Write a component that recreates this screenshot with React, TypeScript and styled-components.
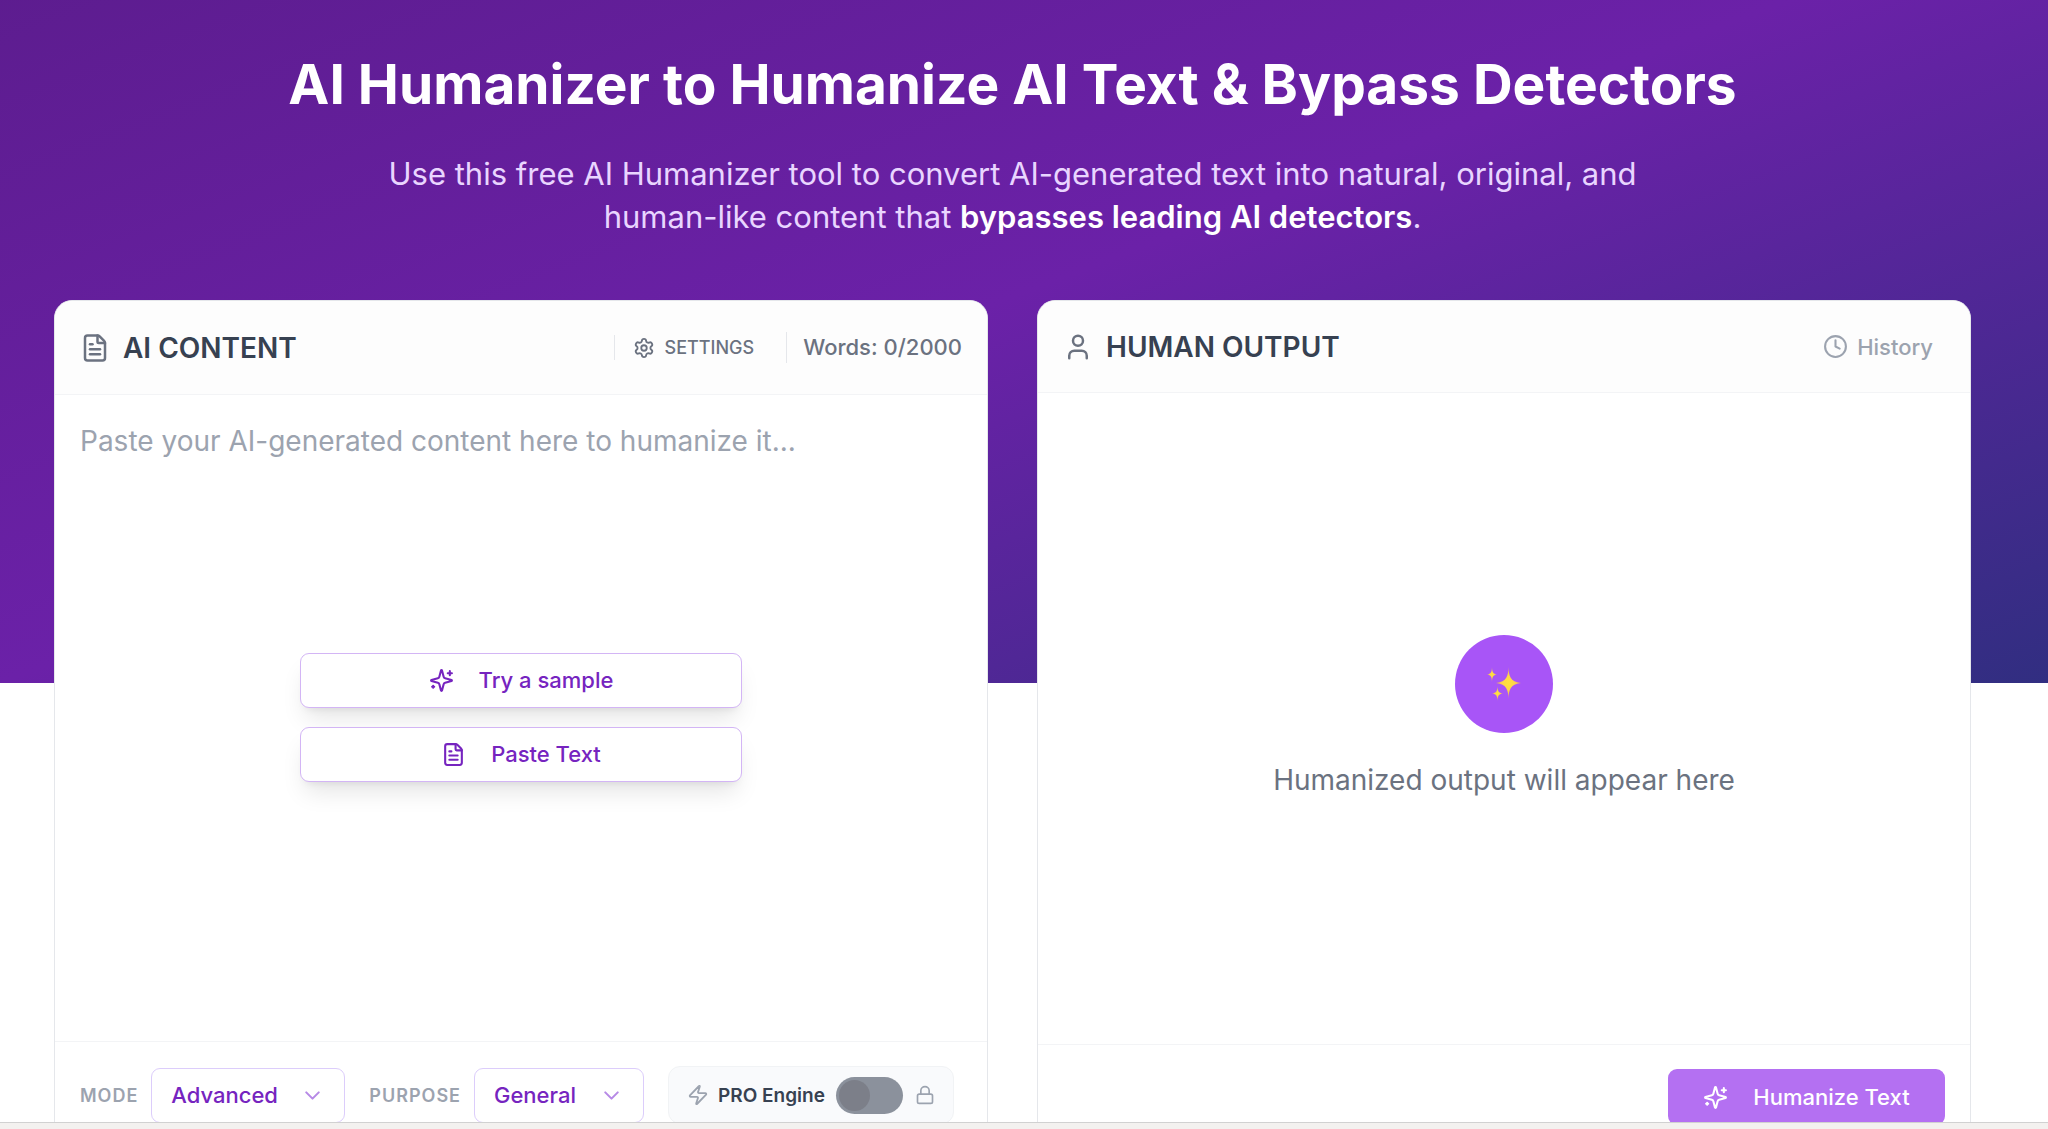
import { useState } from "react";
import styled, { createGlobalStyle } from "styled-components";
import {
  ChevronDown,
  Clock,
  FileText,
  Lock,
  Settings,
  User,
  Zap,
} from "lucide-react";

const GlobalStyle = createGlobalStyle`
  * { box-sizing: border-box; }
  body {
    margin: 0;
    font-family: Inter, "Liberation Sans", sans-serif;
    background: #fff;
    color: #374151;
  }
  button, select, textarea { font: inherit; }
`;

const Shell = styled.div`
  display: flex;
  flex-direction: column;
  height: 100vh;
`;

const Page = styled.div`
  flex: 1;
  min-height: 0;
  overflow: hidden;
  padding: 49px 77px 0 54px;
  background: linear-gradient(to bottom right, #5b1c8c, #6b21a8 50%, #312e81) 0 -98px / 100% 781px no-repeat;
`;

const StatusStrip = styled.div`
  height: 7px;
  border-top: 1px solid #d1d1d1;
  background: #f3f1ef;
`;

const Hero = styled.header`
  text-align: center;
`;

const Title = styled.h1`
  margin: 0;
  font-size: 55px;
  line-height: 70px;
  font-weight: 700;
  color: #fff;
`;

const Lead = styled.p`
  max-width: 1300px;
  margin: 33px auto 0;
  font-size: 31px;
  line-height: 43px;
  color: #e9d5ff;

  strong {
    font-weight: 600;
    color: #fff;
  }
`;

const Cards = styled.main`
  display: grid;
  grid-template-columns: 1fr 1fr;
  gap: 49px;
  margin-top: 62px;
`;

const Card = styled.section`
  display: flex;
  flex-direction: column;
  border: 1px solid #e5e7eb;
  border-radius: 18px;
  background: #fff;
  overflow: hidden;
`;

const CardHeader = styled.div<{ $height: number }>`
  display: flex;
  align-items: center;
  justify-content: space-between;
  height: ${(p) => p.$height}px;
  padding: 0 25px;
  border-bottom: 1px solid #f3f4f6;
  background: #fdfdfd;
`;

const CardTitle = styled.h2`
  display: flex;
  align-items: center;
  gap: 13px;
  margin: 0;
  font-size: 28px;
  line-height: 36px;
  font-weight: 600;

  svg { color: #6b7280; }
`;

const HeaderTools = styled.div`
  display: flex;
  align-items: center;
`;

const SettingsButton = styled.button`
  display: flex;
  align-items: center;
  gap: 10px;
  height: 25px;
  margin-right: 32px;
  padding: 0 0 0 18px;
  border: 0;
  border-left: 1px solid #e5e7eb;
  background: none;
  font-size: 18px;
  font-weight: 500;
  color: #6b7280;
`;

const WordCount = styled.span`
  padding-left: 16px;
  border-left: 1px solid #e5e7eb;
  font-size: 22px;
  line-height: 31px;
  font-weight: 500;
  color: #6b7280;
`;

const HistoryButton = styled.button`
  display: flex;
  align-items: center;
  gap: 9px;
  padding: 0 12px;
  border: 0;
  background: none;
  font-size: 22px;
  font-weight: 500;
  color: #9ca3af;
`;

const Editor = styled.div`
  display: grid;
  height: 646px;

  > * { grid-area: 1 / 1; }
`;

const ContentInput = styled.textarea`
  width: 100%;
  padding: 26px 25px;
  border: 0;
  outline: 0;
  resize: none;
  background: transparent;
  font-size: 28px;
  line-height: 40px;
  color: #374151;

  &::placeholder { color: #9ca3af; opacity: 1; }
`;

const QuickActions = styled.div`
  display: flex;
  flex-direction: column;
  gap: 19px;
  place-self: center;
  width: 442px;
  padding-bottom: 2px;
`;

const QuickButton = styled.button`
  display: flex;
  align-items: center;
  justify-content: center;
  gap: 25px;
  height: 55px;
  border: 1px solid #d3b5f5;
  border-radius: 9px;
  background: #fff;
  box-shadow: 0 15px 23px -5px rgb(0 0 0 / 0.1), 0 6px 9px -6px rgb(0 0 0 / 0.1);
  font-size: 22px;
  font-weight: 500;
  color: #7624bf;
`;

const Output = styled.div`
  display: flex;
  flex-direction: column;
  align-items: center;
  justify-content: center;
  gap: 27px;
  height: 651px;
  padding-bottom: 3px;
  font-size: 28px;
  line-height: 40px;
  color: #6b7280;
`;

const OutputBadge = styled.div`
  display: grid;
  place-items: center;
  width: 98px;
  height: 98px;
  border-radius: 50%;
  background: #a855f7;
`;

const CardFooter = styled.div<{ $end?: boolean }>`
  display: flex;
  align-items: center;
  justify-content: ${(p) => (p.$end ? "flex-end" : "flex-start")};
  gap: 24px;
  padding: 24px 25px;
  border-top: 1px solid #f3f4f6;
`;

const Field = styled.div`
  display: flex;
  align-items: center;
  gap: 13px;
`;

const FieldLabel = styled.label`
  font-size: 18px;
  font-weight: 600;
  letter-spacing: 1px;
  color: #9ca3af;
`;

const SelectWrap = styled.div<{ $width: number }>`
  display: grid;
  align-items: center;
  width: ${(p) => p.$width}px;

  > * { grid-area: 1 / 1; }

  svg {
    justify-self: end;
    margin-right: 20px;
    color: #b78ae6;
    pointer-events: none;
  }
`;

const Select = styled.select`
  width: 100%;
  height: 55px;
  padding: 0 44px 0 19px;
  border: 1px solid #dccdfb;
  border-radius: 9px;
  appearance: none;
  background: #fff;
  font-size: 22px;
  font-weight: 500;
  color: #7624bf;
`;

const EngineBox = styled.div`
  display: flex;
  align-items: center;
  height: 58px;
  padding: 0 18px;
  border: 1px solid #f1f3f5;
  border-radius: 12px;
  background: #f9fafc;
  color: #9ca3af;
`;

const EngineLabel = styled.label`
  margin: 0 11px 0 9px;
  font-size: 19px;
  font-weight: 600;
  color: #374151;
`;

const Toggle = styled.input`
  display: flex;
  align-items: center;
  width: 67px;
  height: 37px;
  margin: 0 12px 0 0;
  padding: 0 3px;
  border-radius: 19px;
  appearance: none;
  background: #8b919c;

  &::before {
    content: "";
    width: 31px;
    height: 31px;
    border-radius: 50%;
    background: #7c7f89;
  }
`;

const PrimaryButton = styled.button`
  display: flex;
  align-items: center;
  justify-content: center;
  gap: 25px;
  width: 277px;
  height: 56px;
  border: 0;
  border-radius: 9px;
  background: #b470f2;
  font-size: 22px;
  font-weight: 500;
  color: #fff;
`;

function SparkleIcon() {
  return (
    <svg
      width="25"
      height="25"
      viewBox="0 0 24 24"
      fill="none"
      stroke="currentColor"
      strokeWidth="2"
      strokeLinecap="round"
      strokeLinejoin="round"
      aria-hidden="true"
    >
      <path d="M9.937 15.5A2 2 0 0 0 8.5 14.063l-6.135-1.582a.5.5 0 0 1 0-.962L8.5 9.936A2 2 0 0 0 9.937 8.5l1.582-6.135a.5.5 0 0 1 .963 0L14.063 8.5A2 2 0 0 0 15.5 9.937l6.135 1.581a.5.5 0 0 1 0 .964L15.5 14.063a2 2 0 0 0-1.437 1.437l-1.582 6.135a.5.5 0 0 1-.963 0z" />
      <path d="M20 3v4M22 5h-4M4 17v2M5 18H3" />
    </svg>
  );
}

function Glitter() {
  return (
    <svg width="34" height="34" viewBox="0 0 34 34" aria-hidden="true">
      <defs>
        <radialGradient id="glow">
          <stop offset="0" stopColor="#ffe23c" />
          <stop offset="0.5" stopColor="#fdd54a" />
          <stop offset="1" stopColor="#e39a78" />
        </radialGradient>
      </defs>
      <g fill="url(#glow)">
        <path d="M21.500 0C21.800 9 23 14.500 34 16C23 17.500 21.800 23 21.500 32C21.200 23 20 17.500 9 16C20 14.500 21.200 9 21.500 0Z" />
        <path d="M5 0C5.200 5 6 7 10 7.500C6 8 5.200 10 5 15C4.800 10 4 8 0 7.500C4 7 4.800 5 5 0Z" />
        <path d="M10.500 19C10.700 24 11.500 26 16 26.500C11.500 27 10.700 29 10.500 34C10.300 29 9.500 27 5 26.500C9.500 26 10.300 24 10.500 19Z" />
      </g>
    </svg>
  );
}

export default function App() {
  const [text, setText] = useState("");
  const words = text.trim() ? text.trim().split(/\s+/).length : 0;

  return (
    <Shell>
      <GlobalStyle />
      <Page>
        <Hero>
          <Title>AI Humanizer to Humanize AI Text &amp; Bypass Detectors</Title>
          <Lead>
            Use this free AI Humanizer tool to convert AI-generated text into natural, original, and
            human-like content that <strong>bypasses leading AI detectors</strong>.
          </Lead>
        </Hero>
        <Cards>
          <Card>
            <CardHeader $height={94}>
              <CardTitle><FileText size={30} />AI CONTENT</CardTitle>
              <HeaderTools>
                <SettingsButton type="button"><Settings size={22} />SETTINGS</SettingsButton>
                <WordCount>Words: {words}/2000</WordCount>
              </HeaderTools>
            </CardHeader>
            <Editor>
              <ContentInput
                aria-label="AI content"
                placeholder="Paste your AI-generated content here to humanize it..."
                value={text}
                onChange={(e) => setText(e.target.value)}
              />
              <QuickActions>
                <QuickButton type="button"><SparkleIcon />Try a sample</QuickButton>
                <QuickButton type="button"><FileText size={25} />Paste Text</QuickButton>
              </QuickActions>
            </Editor>
            <CardFooter>
              <Field>
                <FieldLabel htmlFor="mode">MODE</FieldLabel>
                <SelectWrap $width={194}>
                  <Select id="mode"><option>Advanced</option></Select>
                  <ChevronDown size={25} />
                </SelectWrap>
              </Field>
              <Field>
                <FieldLabel htmlFor="purpose">PURPOSE</FieldLabel>
                <SelectWrap $width={170}>
                  <Select id="purpose"><option>General</option></Select>
                  <ChevronDown size={25} />
                </SelectWrap>
              </Field>
              <EngineBox>
                <Zap size={22} />
                <EngineLabel htmlFor="engine">PRO Engine</EngineLabel>
                <Toggle id="engine" type="checkbox" role="switch" disabled />
                <Lock size={20} strokeWidth={2} />
              </EngineBox>
            </CardFooter>
          </Card>
          <Card>
            <CardHeader $height={92}>
              <CardTitle><User size={30} />HUMAN OUTPUT</CardTitle>
              <HistoryButton type="button"><Clock size={25} />History</HistoryButton>
            </CardHeader>
            <Output>
              <OutputBadge><Glitter /></OutputBadge>
              Humanized output will appear here
            </Output>
            <CardFooter $end>
              <PrimaryButton type="button"><SparkleIcon />Humanize Text</PrimaryButton>
            </CardFooter>
          </Card>
        </Cards>
      </Page>
      <StatusStrip />
    </Shell>
  );
}
